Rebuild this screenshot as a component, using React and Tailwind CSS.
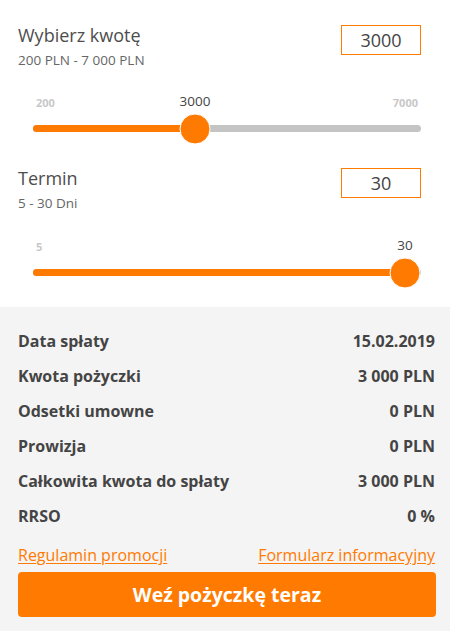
export default function App() {
  return (
    <div className="w-[450px] h-[631px] overflow-hidden bg-white text-[#444] font-['Open_Sans',sans-serif]">
      {/* Sliders */}
      <div className="pt-[24px] pb-[31px] pl-[18px] pr-[29px]">
        <Field title="Wybierz kwotę" range="200 PLN - 7 000 PLN" value="3000" />
        <Slider min="200" max="7000" value="3000" thumb={162} className="mt-[23px]" />

        <div className="mt-[35px]">
          <Field title="Termin" range="5 - 30 Dni" value="30" />
        </div>
        <Slider min="5" max="" value="30" thumb={372} className="mt-[24px]" />
      </div>

      {/* Summary */}
      <div className="h-[324px] bg-[#f4f4f4] pt-[16px] pl-[18px] pr-[15px]">
        <Row label="Data spłaty" value="15.02.2019" />
        <Row label="Kwota pożyczki" value="3 000 PLN" />
        <Row label="Odsetki umowne" value="0 PLN" />
        <Row label="Prowizja" value="0 PLN" />
        <Row label="Całkowita kwota do spłaty" value="3 000 PLN" />
        <Row label="RRSO" value="0 %" />

        <div className="mt-[12px] flex justify-between text-[16px] leading-[20px] text-[#ff7a00]">
          <a href="#" className="underline underline-offset-2">Regulamin promocji</a>
          <a href="#" className="underline underline-offset-2">Formularz informacyjny</a>
        </div>

        <button className="mt-[7px] h-[45px] w-[418px] rounded-[4px] bg-[#ff7a00] text-[19.5px] font-bold text-white">
          Weź pożyczkę teraz
        </button>
      </div>
    </div>
  );
}

function Field({ title, range, value }) {
  return (
    <div className="flex items-start justify-between">
      <div>
        <p className="text-[18px] leading-[22px] text-[#4d4d4d]">{title}</p>
        <p className="mt-[5px] text-[13.5px] leading-[18px] text-[#666]">{range}</p>
      </div>
      <div className="mt-[1px] flex h-[30px] w-[80px] items-center justify-center border border-[#ff7a00] text-[18px] text-[#444]">
        {value}
      </div>
    </div>
  );
}

function Slider({ min, max, value, thumb, className }) {
  return (
    <div className={`relative ml-[15px] w-[388px] ${className}`}>
      <div className="flex h-[18px] items-center justify-between px-[3px] pt-[4px] text-[11px] font-bold text-[#c8c8c8]">
        <span>{min}</span>
        <span>{max}</span>
      </div>
      <span
        className="absolute top-0 -translate-x-1/2 text-[13.5px] leading-[18px] text-[#444]"
        style={{ left: thumb }}
      >
        {value}
      </span>
      <div className="relative mt-[15px] h-[7px] rounded-full bg-[#c4c4c4]">
        <div className="h-full rounded-full bg-[#ff7a00]" style={{ width: thumb }} />
        <div
          className="absolute top-1/2 h-[31px] w-[31px] -translate-x-1/2 -translate-y-1/2 rounded-full border border-white bg-[#ff7a00]"
          style={{ left: thumb }}
        />
      </div>
    </div>
  );
}

function Row({ label, value }) {
  return (
    <div className="flex h-[35px] items-center justify-between text-[16px] font-bold text-[#444]">
      <span>{label}</span>
      <span>{value}</span>
    </div>
  );
}
